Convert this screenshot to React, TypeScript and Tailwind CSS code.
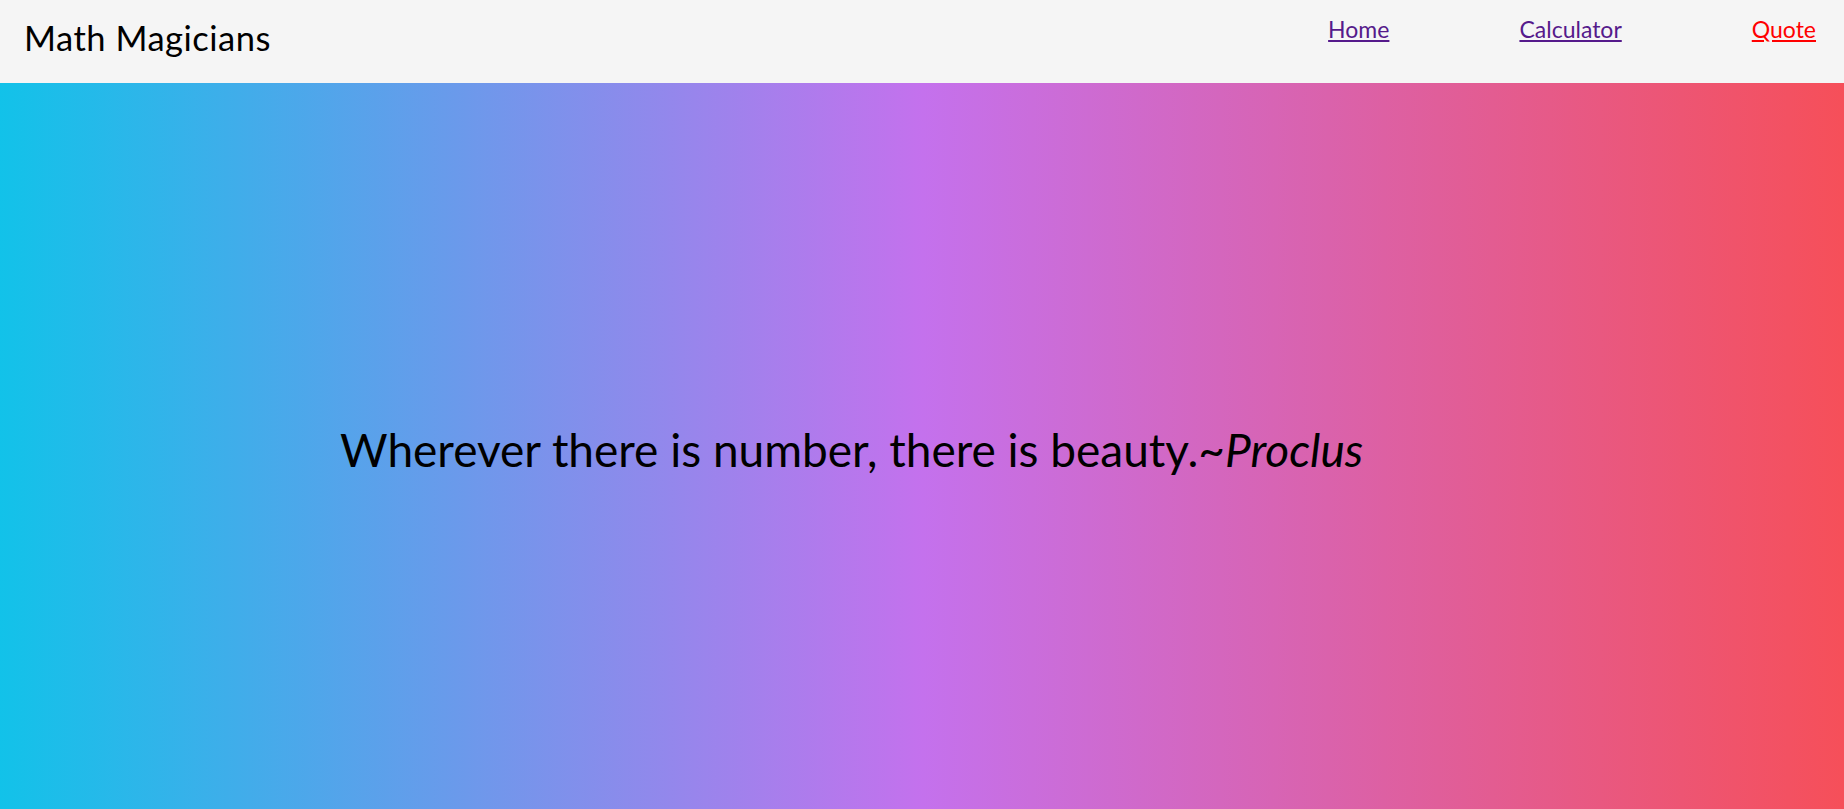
export default function App() {
  return (
    <div className="min-h-screen w-full font-['Lato','Open_Sans',sans-serif] text-black">
      <header className="flex h-[83px] items-start justify-between bg-[#f5f5f5] pl-6 pr-7">
        <h1 className="pt-[17px] text-[34.5px] leading-[42px] tracking-[0.5px]">Math Magicians</h1>
        <nav className="flex gap-[130px] pt-[15px] text-[23px] leading-[28px]">
          <a href="#" className="text-[#551a8b] underline">Home</a>
          <a href="#" className="text-[#551a8b] underline">Calculator</a>
          <a href="#" className="text-[#ff0000] underline">Quote</a>
        </nav>
      </header>
      <main className="flex h-[726px] items-center bg-[linear-gradient(to_right,#12c2e9,#c471ed,#f64f59)] pt-[8px] pl-[340px]">
        <p className="text-[46px] leading-[58px]">
          Wherever there is number, there is beauty.~<em>Proclus</em>
        </p>
      </main>
    </div>
  );
}
